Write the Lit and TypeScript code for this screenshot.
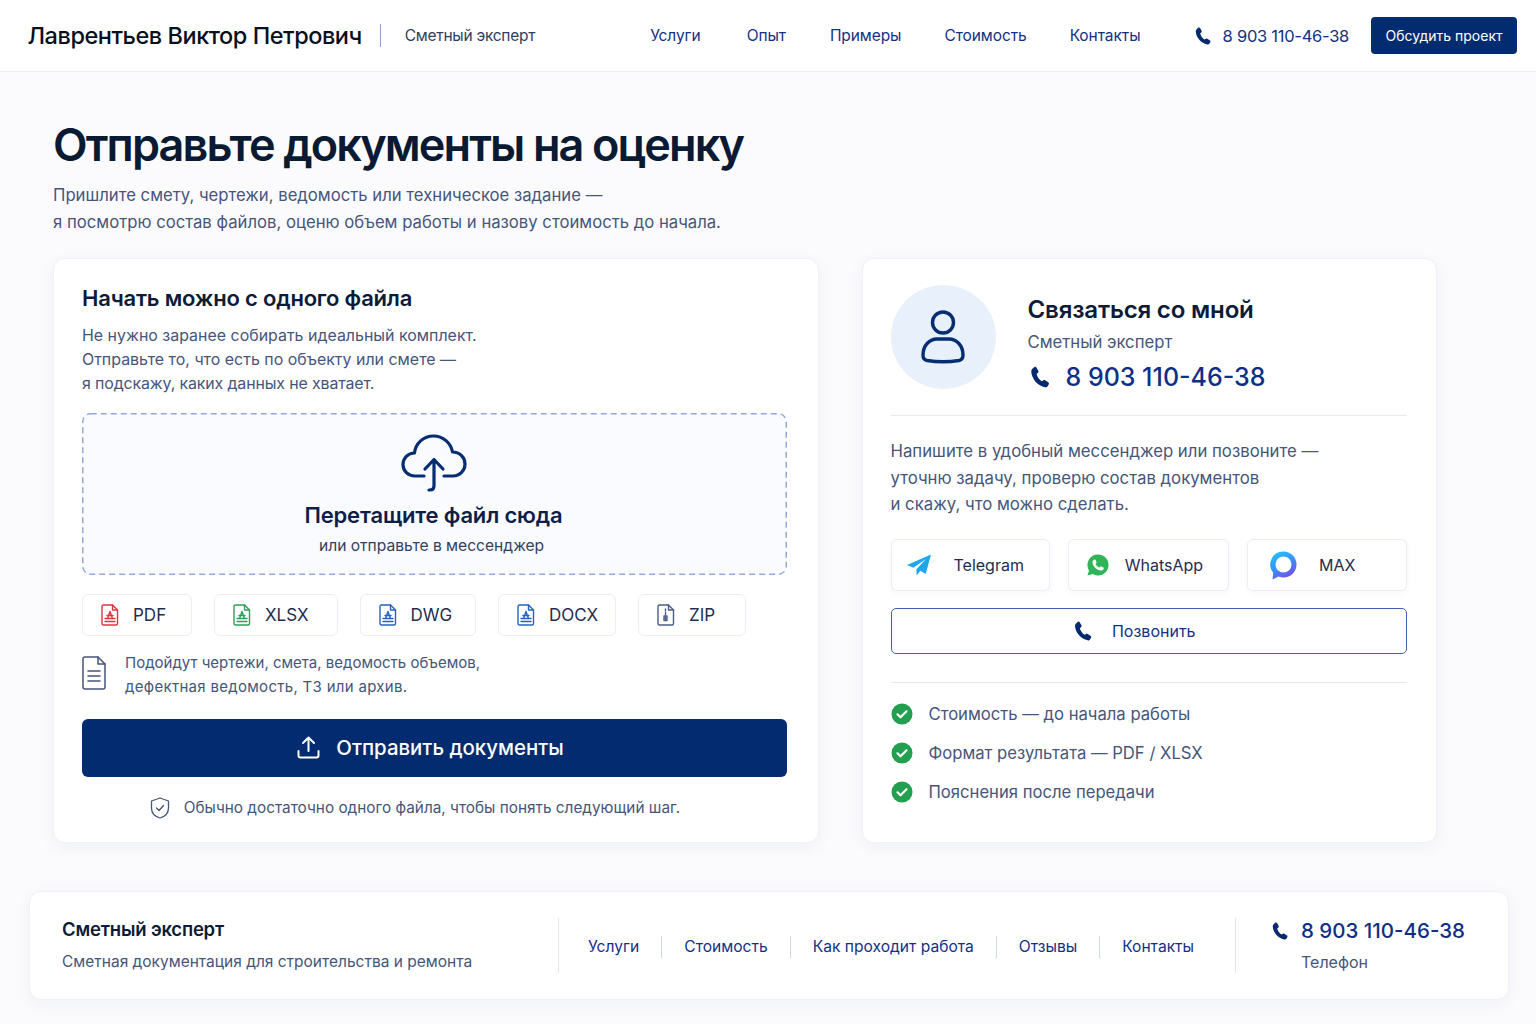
import { LitElement, html, css, svg } from 'lit';
import { customElement } from 'lit/decorators.js';

const PHONE = svg`<path d="M6.5 1.900c.7-.4 1.500-.2 1.900.5l1.900 3.400c.4.6.2 1.400-.3 1.900L8.600 8.900c.7 2.900 2.800 5.800 5.300 7.300l1.500-1c.6-.4 1.300-.4 1.800 0l3.200 2.200c.6.4.8 1.200.4 1.800l-1 1.700c-.5.9-1.600 1.500-2.700 1.300C9.900 21 3.500 13.600 3.300 6.400c0-1.100.5-2.100 1.400-2.800z" fill="currentColor"/>`;

const phoneIcon = (size: number) =>
  html`<svg class="phone-icon" width=${size} height=${size} viewBox="0 0 24 24">${PHONE}</svg>`;

const fileIcon = (color: string, zip = false) => html`<svg width="18" height="22" viewBox="0 0 18 22" fill="none" stroke=${color} stroke-width="1.400" stroke-linejoin="round" stroke-linecap="round">
  <path d="M2.500 1h9l5 5v13.500a1.500 1.500 0 0 1-1.500 1.500H2.500A1.500 1.500 0 0 1 1 19.500v-17A1.500 1.500 0 0 1 2.500 1z"/>
  <path d="M11.500 1v5h5"/>
  ${zip
    ? svg`<path d="M8.500 5v2M8.500 8.500v2M7 12h3v4.500H7zM8.500 13.500v1.500"/>`
    : svg`<path d="M9 7.500l-2.500 7M9 7.500l2.500 7M6 11.500h6M4 14.500h10M4 17.500h10"/>`}
</svg>`;

const CHIPS = [
  { label: 'PDF', color: '#e2343f' },
  { label: 'XLSX', color: '#2aa05a' },
  { label: 'DWG', color: '#2862c4' },
  { label: 'DOCX', color: '#2862c4' },
  { label: 'ZIP', color: '#4a5c8a', zip: true },
];

const telegram = html`<svg width="26" height="24" viewBox="0 0 26 24"><path d="M25 1.500L1 12.100l6.400 2.600L20 6l-9.600 10.200.1 6.300 3.900-4.700 5.300 3.300z" fill="#1ea7ee"/></svg>`;

const whatsapp = html`<svg width="24" height="24" viewBox="0 0 24 24">
  <path d="M12 1.500a10.500 10.500 0 0 0-9 15.900L1.500 22.500l5.300-1.400A10.500 10.500 0 1 0 12 1.500z" fill="#2fb457"/>
  <path d="M8.700 6.600c.4 0 .7 0 .9.500l.9 2.100c.1.300 0 .6-.2.900l-.7.800c.9 1.700 2.200 2.900 4 3.700l.9-1c.2-.3.500-.4.900-.2l2 1c.4.200.5.500.4.900-.2 1.500-1.500 2.400-3 2.300-4-.4-7.600-3.800-8.300-7.500-.3-1.600.6-3.200 2.200-3.500z" fill="#fff"/>
</svg>`;

const maxIcon = html`<svg width="30" height="30" viewBox="0 0 30 30" fill="none">
  <defs><linearGradient id="mx" x1="0.200" y1="0" x2="0.700" y2="1"><stop offset="0" stop-color="#22c4f5"/><stop offset="0.550" stop-color="#3d8bf5"/><stop offset="1" stop-color="#7b45ea"/></linearGradient></defs>
  <path d="M15.500 1.500a13 13 0 0 1 0 26c-1.800 0-3.500-.4-5-1L4.500 29.500l.7-6.800A13 13 0 0 1 15.500 1.500zm0 5a8 8 0 1 0 0 16 8 8 0 0 0 0-16z" fill="url(#mx)" fill-rule="evenodd"/>
</svg>`;

const check = html`<svg width="22" height="22" viewBox="0 0 22 22"><circle cx="11" cy="11" r="10.500" fill="#22a04f"/><path d="M6.500 11.300l3 3 6-6" fill="none" stroke="#fff" stroke-width="2.200" stroke-linecap="round" stroke-linejoin="round"/></svg>`;

@customElement('app-root')
export class AppRoot extends LitElement {
  static styles = css`
    :host {
      display: block;
      height: 1024px;
      overflow: hidden;
      background: #fbfbfd;
      color: #0b1a33;
      font-family: 'Inter', 'Noto Sans', sans-serif;
    }

    svg {
      display: block;
      flex: none;
    }

    .header {
      display: flex;
      align-items: center;
      height: 71px;
      padding: 0 19px 0 27.500px;
      background: #fff;
      border-bottom: 1px solid #eceef6;
    }
    .brand {
      font-size: 23.500px;
      font-weight: 500;
      letter-spacing: -0.470px;
      color: #0a0f1c;
      white-space: nowrap;
    }
    .brand-role {
      margin-left: 18px;
      padding-left: 24px;
      border-left: 1px solid #8ea2cc;
      font-size: 15.500px;
      letter-spacing: -0.270px;
      line-height: 23px;
      color: #2f3d5e;
    }
    .nav {
      display: flex;
      gap: 44px;
      margin-left: 115px;
      font-size: 15.500px;
      letter-spacing: -0.080px;
      color: #123184;
    }
    .nav span:nth-child(2) {
      margin-left: 2px;
    }
    .nav span:nth-child(n + 4) {
      margin-left: -1px;
    }
    .head-phone {
      display: flex;
      align-items: center;
      gap: 10px;
      margin-left: auto;
      font-size: 16.500px;
      letter-spacing: -0.270px;
      color: #123184;
    }
    .phone-icon {
      color: #04296e;
    }
    .head-btn {
      margin-left: 22px;
      padding: 0 14.500px;
      height: 37px;
      line-height: 37px;
      background: #032c70;
      color: #fff;
      font-size: 14px;
      border-radius: 4px;
    }

    .main {
      padding: 45px 0 0 53px;
    }
    h1 {
      margin: 0;
      font-size: 45px;
      line-height: 56px;
      font-weight: 600;
      letter-spacing: -1.880px;
      color: #0a1a33;
    }
    .lead {
      margin: 9px 0 0;
      font-size: 16.700px;
      line-height: 27px;
      color: #46557a;
    }

    .cards {
      display: grid;
      grid-template-columns: 766px 575px;
      gap: 43px;
      margin-top: 22px;
    }
    .card {
      box-sizing: border-box;
      height: 585px;
      background: #fff;
      border: 1px solid #f0f1f8;
      border-radius: 12px;
      box-shadow: 0 4px 16px rgba(24, 42, 96, 0.05);
    }
    .upload {
      padding: 24px 31px 0 28px;
    }
    h2 {
      margin: 0;
      font-size: 22px;
      line-height: 30px;
      font-weight: 600;
      letter-spacing: -0.200px;
      color: #0c1b38;
    }
    .intro {
      margin: 11px 0 0;
      font-size: 15.950px;
      line-height: 24px;
      color: #46557a;
    }
    .tight {
      letter-spacing: -0.140px;
    }
    .wide {
      letter-spacing: 0.300px;
    }

    .drop {
      position: relative;
      box-sizing: border-box;
      display: flex;
      flex-direction: column;
      align-items: center;
      height: 162px;
      margin-top: 17px;
      padding: 21px 2px 0 0;
      background: #fafbfe;
      border-radius: 8px;
    }
    .dash {
      position: absolute;
      left: 0;
      top: 0;
    }
    .drop-title {
      margin-top: 8px;
      font-size: 22px;
      line-height: 30px;
      font-weight: 600;
      letter-spacing: -0.160px;
      color: #0d1f48;
    }
    .drop-sub {
      margin: 4px 4px 0 0;
      font-size: 15.600px;
      line-height: 24px;
      color: #33415f;
    }

    .chips {
      display: grid;
      grid-template-columns: 110px 123.500px 116.500px 118px 108px;
      gap: 22px;
      margin-top: 19px;
    }
    .chip {
      display: flex;
      align-items: center;
      gap: 14px;
      box-sizing: border-box;
      height: 42px;
      padding-left: 18px;
      background: #fff;
      border: 1px solid #eceef7;
      border-radius: 6px;
      font-size: 17px;
      color: #1f2d4f;
    }

    .hint {
      display: flex;
      gap: 19px;
      margin-top: 15px;
      font-size: 15px;
      line-height: 24px;
      color: #46557a;
    }
    .hint svg {
      margin-top: 5px;
    }

    .submit {
      display: flex;
      align-items: center;
      justify-content: center;
      gap: 16px;
      height: 58px;
      margin-top: 20px;
      padding: 0 8px 1px 0;
      box-sizing: border-box;
      background: #032c70;
      color: #fff;
      border-radius: 6px;
      font-size: 20.400px;
      font-weight: 500;
    }
    .safe {
      display: flex;
      align-items: center;
      justify-content: center;
      gap: 14px;
      margin-top: 19px;
      padding-right: 39px;
      font-size: 15.350px;
      line-height: 24px;
      color: #46557a;
    }

    .contact {
      padding: 26px 29px 0 27.500px;
    }
    .person {
      display: flex;
      align-items: flex-start;
      gap: 32px;
      padding-bottom: 26px;
      border-bottom: 1px solid #e6e9f2;
    }
    .avatar {
      display: flex;
      align-items: center;
      justify-content: center;
      flex: none;
      width: 105px;
      height: 104px;
      border-radius: 50%;
      background: #e8f0fb;
    }
    .person-info {
      padding-top: 11px;
    }
    .person-title {
      font-size: 24.100px;
      line-height: 28px;
      font-weight: 600;
      letter-spacing: -0.200px;
      color: #0c1b38;
    }
    .person-role {
      margin-top: 6px;
      font-size: 16.700px;
      line-height: 24px;
      color: #46557a;
    }
    .person-phone {
      display: flex;
      align-items: center;
      gap: 14px;
      margin-top: 11px;
      font-size: 25px;
      line-height: 23px;
      font-weight: 500;
      color: #0f2f84;
    }
    .contact-text {
      margin: 22px 0 0;
      font-size: 16.750px;
      line-height: 26.500px;
      color: #46557a;
    }
    .messengers {
      display: grid;
      grid-template-columns: 159px 161px 160px;
      justify-content: space-between;
      margin-top: 21px;
    }
    .msg {
      display: flex;
      align-items: center;
      box-sizing: border-box;
      height: 52px;
      background: #fff;
      border: 1px solid #eceef7;
      border-radius: 6px;
      box-shadow: 0 2px 6px rgba(24, 42, 96, 0.04);
      font-size: 16px;
      color: #1f2d4f;
    }
    .tg {
      padding-left: 14.500px;
      gap: 21.500px;
    }
    .wa {
      padding-left: 17px;
      gap: 15px;
    }
    .mx {
      padding-left: 20px;
      gap: 21px;
    }
    .call {
      display: flex;
      align-items: center;
      justify-content: center;
      gap: 18px;
      box-sizing: border-box;
      height: 46px;
      margin-top: 17px;
      padding-right: 30px;
      border: 1px solid #3f62b5;
      border-radius: 5px;
      font-size: 16px;
      color: #123184;
    }
    .checks {
      display: flex;
      flex-direction: column;
      gap: 15px;
      margin-top: 28px;
      padding-top: 19px;
      border-top: 1px solid #e6e9f2;
      font-size: 16.650px;
      line-height: 24px;
      color: #46557a;
    }
    .checks div {
      display: flex;
      align-items: center;
      gap: 16px;
    }

    .footer {
      box-sizing: border-box;
      display: flex;
      align-items: center;
      width: 1480px;
      height: 109px;
      margin: 48px 0 0 29px;
      padding-left: 32px;
      background: #fff;
      border: 1px solid #f0f1f8;
      border-radius: 12px;
      box-shadow: 0 4px 16px rgba(24, 42, 96, 0.05);
    }
    .foot-about {
      width: 496px;
      flex: none;
      padding-bottom: 3px;
    }
    .foot-name {
      font-size: 18.500px;
      line-height: 28px;
      font-weight: 600;
      letter-spacing: -0.200px;
      color: #0c1b38;
    }
    .foot-desc {
      margin-top: 7px;
      font-size: 15.500px;
      line-height: 24px;
      color: #46557a;
    }
    .foot-links {
      display: flex;
      align-items: center;
      width: 678px;
      height: 55px;
      flex: none;
      box-sizing: border-box;
      padding: 2px 0 0 29px;
      border-left: 1px solid #e3e6ef;
      border-right: 1px solid #e3e6ef;
      font-size: 15.600px;
      color: #123184;
    }
    .foot-links span {
      line-height: 22px;
      padding-right: 22px;
      margin-right: 22px;
      border-right: 1px solid #cfd8ea;
    }
    .foot-links span:last-child {
      border-right: none;
      padding-right: 0;
      margin-right: 0;
    }
    .foot-contact {
      padding-left: 33.500px;
    }
    .foot-phone {
      display: flex;
      align-items: center;
      gap: 11.500px;
      font-size: 20.500px;
      line-height: 28px;
      font-weight: 500;
      color: #0f2f84;
    }
    .foot-label {
      margin: 5px 0 0 31.500px;
      font-size: 16px;
      line-height: 24px;
      color: #46557a;
    }
  `;

  render() {
    return html`
      <div class="header">
        <div class="brand">Лаврентьев Виктор Петрович</div>
        <div class="brand-role">Сметный эксперт</div>
        <div class="nav">
          ${['Услуги', 'Опыт', 'Примеры', 'Стоимость', 'Контакты'].map((n) => html`<span>${n}</span>`)}
        </div>
        <div class="head-phone">${phoneIcon(20)}8 903 110-46-38</div>
        <div class="head-btn">Обсудить проект</div>
      </div>

      <div class="main">
        <h1>Отправьте документы на оценку</h1>
        <p class="lead">
          Пришлите смету, чертежи, ведомость или техническое задание —<br />
          я посмотрю состав файлов, оценю объем работы и назову стоимость до начала.
        </p>

        <div class="cards">
          <div class="card upload">
            <h2>Начать можно с одного файла</h2>
            <p class="intro">
              Не нужно заранее собирать идеальный комплект.<br />
              Отправьте то, что есть по объекту или смете —<br />
              <span class="tight">я подскажу, каких данных не хватает.</span>
            </p>

            <div class="drop">
              <svg class="dash" width="705" height="162" fill="none" stroke="#93a9dc" stroke-width="1.500" stroke-dasharray="6 4">
                <rect x="0.750" y="0.750" width="703.500" height="160.500" rx="8"/>
              </svg>
              <svg width="66" height="58" viewBox="0 0 66 58" fill="none" stroke="#052d72" stroke-width="3.200" stroke-linecap="round" stroke-linejoin="round">
                <path d="M23 42H14C7 42 2 37 2 30.500 2 24 7 19 13.500 19c1-9.500 9-17 19-17 9.500 0 17.500 7 19 16 7.500 0 12.500 5.500 12.500 12 0 6.500-5 12-12 12h-9"/>
                <path d="M24 35l9-9.500L42 35M33 26v26c0 2.500-1.500 4-4 4h-1"/>
              </svg>
              <div class="drop-title">Перетащите файл сюда</div>
              <div class="drop-sub">или отправьте в мессенджер</div>
            </div>

            <div class="chips">
              ${CHIPS.map(
                (c) => html`<div class="chip">${fileIcon(c.color, c.zip)}<span>${c.label}</span></div>`
              )}
            </div>

            <div class="hint">
              <svg width="24" height="34" viewBox="0 0 24 34" fill="none" stroke="#46557a" stroke-width="1.500" stroke-linejoin="round" stroke-linecap="round">
                <path d="M3 1h13l7 7v23a2 2 0 0 1-2 2H3a2 2 0 0 1-2-2V3a2 2 0 0 1 2-2z"/>
                <path d="M16 1v7h7M6 15h12M6 20h12M6 25h12"/>
              </svg>
              <div>
                Подойдут чертежи, смета, ведомость объемов,<br />
                <span class="wide">дефектная ведомость, ТЗ или архив.</span>
              </div>
            </div>

            <div class="submit">
              <svg width="23" height="23" viewBox="0 0 23 23" fill="none" stroke="#fff" stroke-width="2" stroke-linecap="round" stroke-linejoin="round">
                <path d="M11.500 15V2M6 7l5.500-5.500L17 7M1.500 15v4.500a2 2 0 0 0 2 2h16a2 2 0 0 0 2-2V15"/>
              </svg>
              Отправить документы
            </div>

            <div class="safe">
              <svg width="20" height="22" viewBox="0 0 20 22" fill="none" stroke="#46557a" stroke-width="1.300" stroke-linecap="round" stroke-linejoin="round">
                <path d="M10 1l8.500 3v7c0 5-3.500 8.500-8.500 10C5 19.500 1.500 16 1.500 11V4z"/>
                <path d="M6.500 11l2.500 2.500 4.500-5"/>
              </svg>
              Обычно достаточно одного файла, чтобы понять следующий шаг.
            </div>
          </div>

          <div class="card contact">
            <div class="person">
              <div class="avatar">
                <svg width="44" height="54" viewBox="0 0 44 54" fill="none" stroke="#052d72" stroke-width="3.400" stroke-linejoin="round">
                  <circle cx="22" cy="12.500" r="10.500"/>
                  <path d="M2 45c0-10 7-16 14-16h12c7 0 14 6 14 16 0 3-1.500 5-4 5.500-10 1.500-22 1.500-32 0-2.500-.5-4-2.500-4-5.500z"/>
                </svg>
              </div>
              <div class="person-info">
                <div class="person-title">Связаться со мной</div>
                <div class="person-role">Сметный эксперт</div>
                <div class="person-phone">${phoneIcon(24)}8 903 110-46-38</div>
              </div>
            </div>

            <p class="contact-text">
              Напишите в удобный мессенджер или позвоните —<br />
              уточню задачу, проверю состав документов<br />
              и скажу, что можно сделать.
            </p>

            <div class="messengers">
              <div class="msg tg">${telegram}Telegram</div>
              <div class="msg wa">${whatsapp}WhatsApp</div>
              <div class="msg mx">${maxIcon}MAX</div>
            </div>
            <div class="call">${phoneIcon(22)}Позвонить</div>

            <div class="checks">
              <div>${check}Стоимость — до начала работы</div>
              <div>${check}Формат результата — PDF / XLSX</div>
              <div>${check}Пояснения после передачи</div>
            </div>
          </div>
        </div>
      </div>

      <div class="footer">
        <div class="foot-about">
          <div class="foot-name">Сметный эксперт</div>
          <div class="foot-desc">Сметная документация для строительства и ремонта</div>
        </div>
        <div class="foot-links">
          ${['Услуги', 'Стоимость', 'Как проходит работа', 'Отзывы', 'Контакты'].map((n) => html`<span>${n}</span>`)}
        </div>
        <div class="foot-contact">
          <div class="foot-phone">${phoneIcon(20)}8 903 110-46-38</div>
          <div class="foot-label">Телефон</div>
        </div>
      </div>
    `;
  }
}
